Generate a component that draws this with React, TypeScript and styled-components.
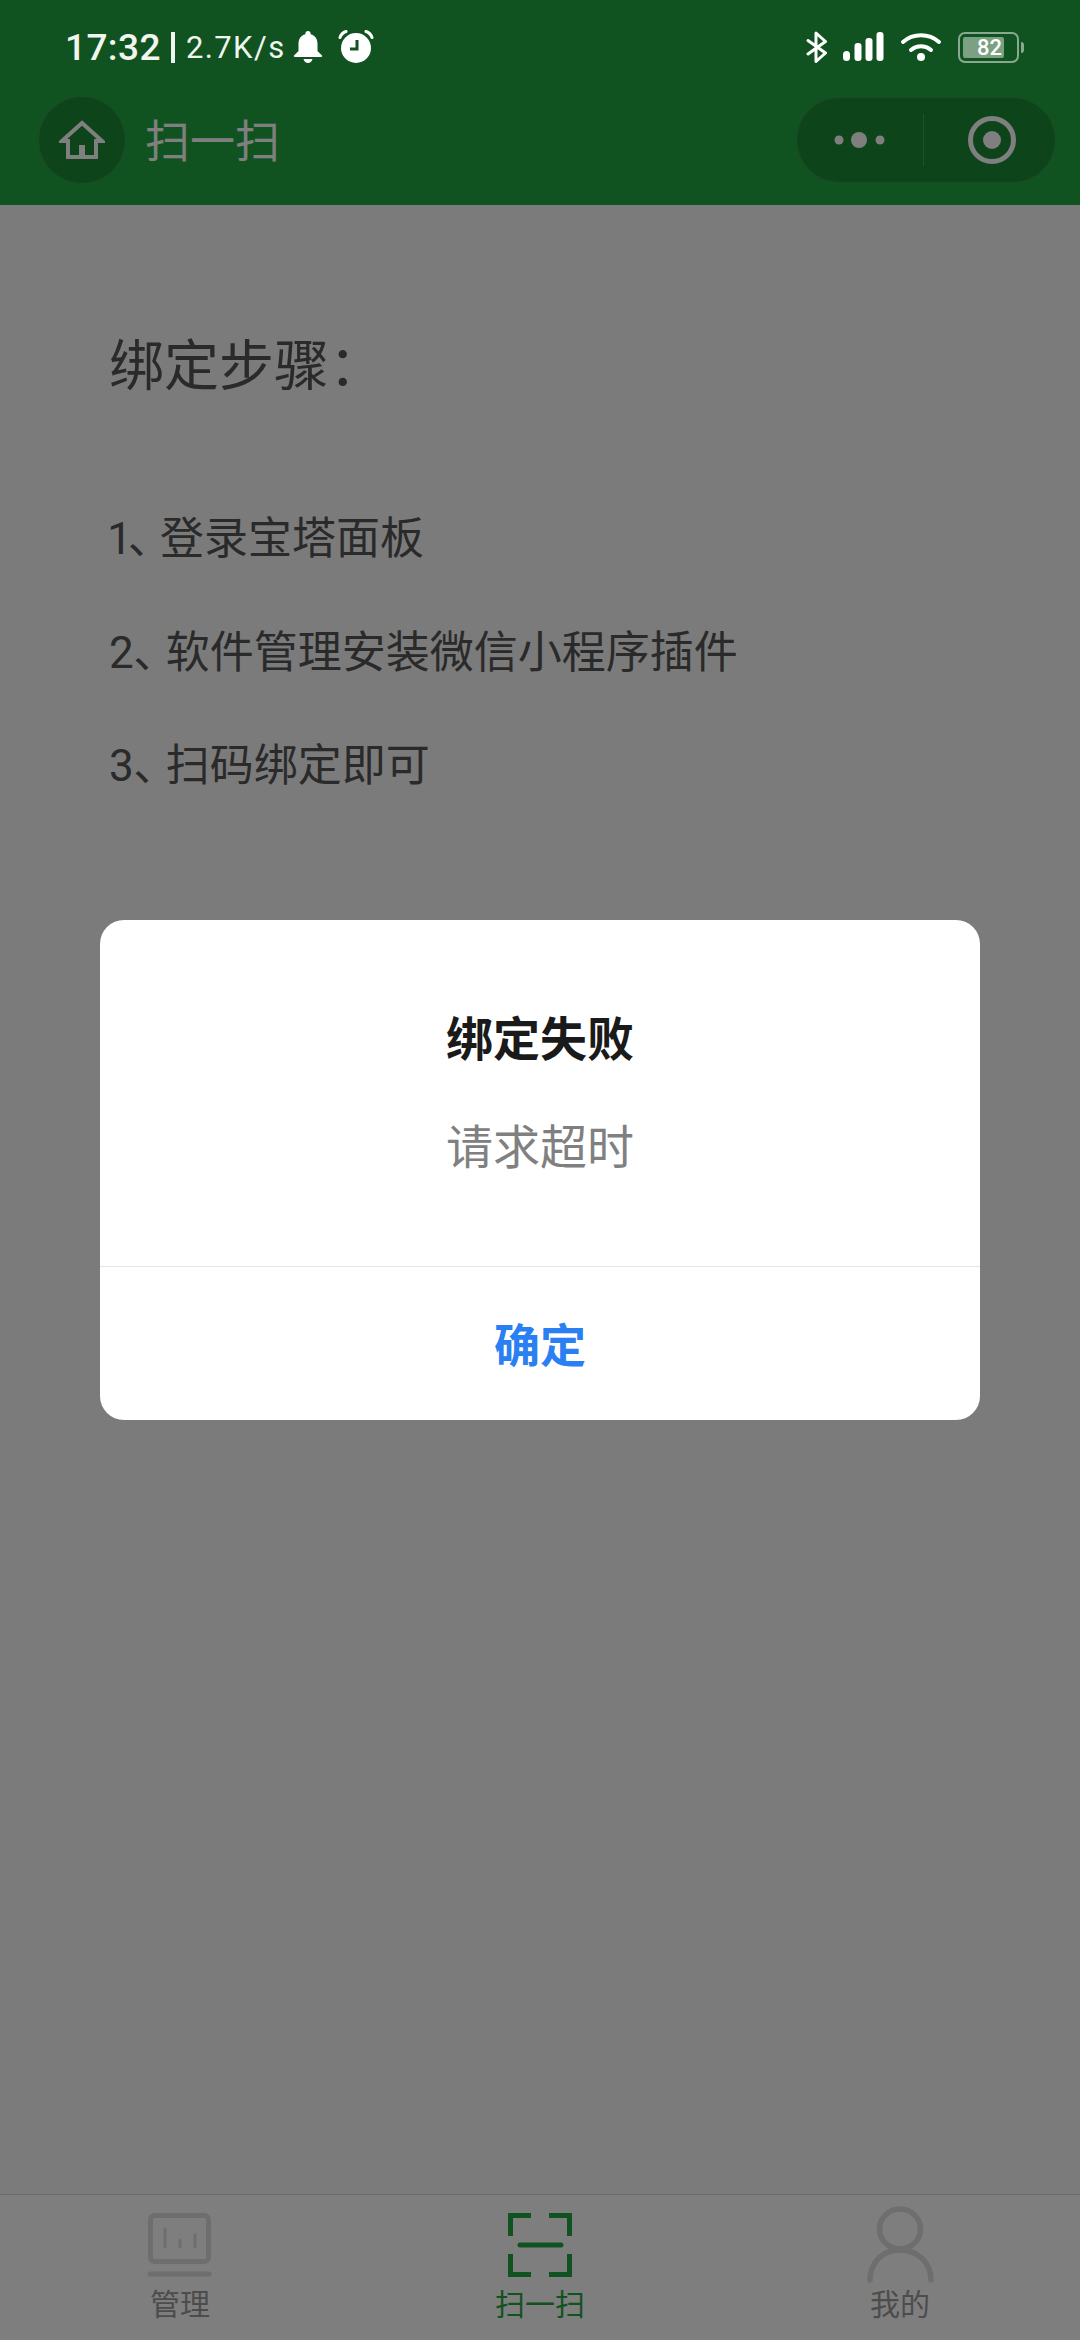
import * as React from "react"
import styled, { createGlobalStyle } from "styled-components"

const GlobalStyle = createGlobalStyle`
  html, body {
    margin: 0;
    padding: 0;
    background: #f6f6f6;
    font-family: Roboto, "Noto Sans CJK SC", sans-serif;
  }
`

const Screen = styled.div`
  position: relative;
  width: 1080px;
  height: 2340px;
  overflow: hidden;
  display: flex;
  flex-direction: column;
  background: #f6f6f6;
`

const StatusBar = styled.div`
  position: absolute;
  top: 0;
  left: 0;
  right: 0;
  z-index: 3;
  height: 94px;
  padding: 0 61px 0 65px;
  display: flex;
  align-items: center;
  justify-content: space-between;
  color: #f0f5f0;
`

const StatusGroup = styled.div`
  display: flex;
  align-items: center;
`

const Clock = styled.span`
  font-size: 37px;
  font-weight: 500;
  letter-spacing: 0.4px;
`

const Pipe = styled.span`
  width: 4px;
  height: 31px;
  margin: 0 11px 0 10px;
  background: #f0f5f0;
`

const Speed = styled.span`
  font-size: 31px;
  font-weight: 400;
  letter-spacing: 1.4px;
  margin-right: 7px;
`

const StatusIcon = styled.svg<{ $gap?: number }>`
  display: block;
  margin-right: ${props => props.$gap ?? 0}px;
`

const Battery = styled.div`
  position: relative;
  box-sizing: border-box;
  width: 61px;
  height: 31px;
  padding: 3px;
  border: 2px solid rgba(255, 255, 255, 0.5);
  border-radius: 7px;

  &::after {
    content: "";
    position: absolute;
    right: -7px;
    top: 8px;
    width: 3px;
    height: 11px;
    border-radius: 0 3px 3px 0;
    background: rgba(255, 255, 255, 0.5);
  }
`

const BatteryFill = styled.div`
  width: 41px;
  height: 21px;
  padding-right: 2px;
  box-sizing: border-box;
  border-radius: 2px;
  background: rgba(255, 255, 255, 0.45);
  color: #ffffff;
  font-size: 22px;
  font-weight: 500;
  line-height: 21px;
  text-align: right;
`

const Header = styled.header`
  flex: none;
  height: 87px;
  padding: 96px 24px 22px 38px;
  display: flex;
  align-items: center;
  background: #22a640;
`

const HomeButton = styled.div`
  box-sizing: border-box;
  width: 88px;
  height: 88px;
  border-radius: 50%;
  border: 1px solid rgba(255, 255, 255, 0.12);
  background: rgba(0, 0, 0, 0.18);
  display: flex;
  align-items: center;
  justify-content: center;
`

const PageTitle = styled.div`
  margin: 6px 0 0 19px;
  flex: 1;
  color: #ffffff;
  font-size: 45px;
  line-height: 88px;
`

const Capsule = styled.div`
  box-sizing: border-box;
  width: 260px;
  height: 86px;
  border-radius: 43px;
  border: 1px solid rgba(255, 255, 255, 0.12);
  background: rgba(0, 0, 0, 0.18);
  display: flex;
  align-items: center;
`

const CapsuleCell = styled.div<{ $inset?: number }>`
  flex: 1;
  box-sizing: border-box;
  padding-left: ${props => props.$inset ?? 0}px;
  display: flex;
  align-items: center;
  justify-content: center;
`

const CapsuleDivider = styled.div`
  width: 1px;
  height: 52px;
  background: rgba(255, 255, 255, 0.2);
`

const Content = styled.main`
  flex: 1;
  padding: 121px 0 0 109px;
  color: #555555;
`

const Heading = styled.div`
  font-size: 55px;
  line-height: 80px;
  margin-bottom: 77px;
`

const Step = styled.div`
  font-size: 44px;
  line-height: 113.5px;
  font-variant-numeric: proportional-nums;
`

const Punct = styled.span`
  font-feature-settings: "palt";
  margin-right: 10px;
`

const TabBar = styled.nav`
  flex: none;
  height: 145px;
  border-top: 1px solid #d6d6d6;
  background: #fdfdff;
  display: grid;
  grid-template-columns: repeat(3, 1fr);
`

const TabItem = styled.div<{ $active?: boolean }>`
  display: flex;
  flex-direction: column;
  align-items: center;
  padding-top: 10px;
  color: ${props => (props.$active ? "#22a640" : "#999999")};
  font-size: 30px;
  line-height: 40px;
`

const TabIcon = styled.svg`
  display: block;
  width: 80px;
  height: 80px;
`

const Mask = styled.div`
  position: absolute;
  inset: 0;
  z-index: 2;
  background: rgba(0, 0, 0, 0.5);
  display: flex;
  align-items: center;
  justify-content: center;
`

const Dialog = styled.div`
  width: 880px;
  height: 500px;
  border-radius: 24px;
  background: #ffffff;
  display: flex;
  flex-direction: column;
  text-align: center;
`

const DialogBody = styled.div`
  padding: 88px 0 86px;
  border-bottom: 1px solid #e5e5e5;
`

const DialogTitle = styled.div`
  font-size: 47px;
  font-weight: 700;
  line-height: 64px;
  color: #1a1a1a;
`

const DialogMessage = styled.div`
  margin-top: 44px;
  font-size: 47px;
  line-height: 64px;
  color: #808080;
`

const DialogButton = styled.div`
  flex: 1;
  padding-bottom: 4px;
  display: flex;
  align-items: center;
  justify-content: center;
  font-size: 46px;
  font-weight: 700;
  color: #2a7ff2;
`

const steps = [
    { num: "1", text: "登录宝塔面板" },
    { num: "2", text: "软件管理安装微信小程序插件" },
    { num: "3", text: "扫码绑定即可" },
]

const TAB_MUTED = "#dcdcdc"
const TAB_GREEN = "#22a640"

export default function App() {
    return (
        <Screen>
            <GlobalStyle />
            <StatusBar>
                <StatusGroup>
                    <Clock>17:32</Clock>
                    <Pipe />
                    <Speed>2.7K/s</Speed>
                    <StatusIcon $gap={15} width="30" height="34" viewBox="0 0 30 34">
                        <path fill="#fff" d="M15 1a2.6 2.6 0 0 1 2.6 2.6v.7C22.6 5.500 24.500 9.500 24.500 14v7l4.500 4.500c.4.6.1 1.500-.9 1.500H1.900c-1 0-1.300-.9-.9-1.500L5.500 21v-7c0-4.500 1.900-8.500 6.900-9.700v-.7A2.600 2.600 0 0 1 15 1Z" />
                        <path fill="#fff" d="M10.500 29h9c-.6 2.500-2.400 4-4.500 4s-3.900-1.500-4.500-4Z" />
                    </StatusIcon>
                    <StatusIcon width="36" height="34" viewBox="0 0 36 34">
                        <circle cx="18" cy="18" r="15" fill="#fff" />
                        <path fill="none" stroke="#115320" strokeWidth="3" d="M19 10v9h-7" />
                        <path fill="none" stroke="#fff" strokeWidth="3" strokeLinecap="round" d="M2 7.500C3 4.500 5 2.500 8 1.500M34 7.500c-1-3-3-5-6-6" />
                    </StatusIcon>
                </StatusGroup>
                <StatusGroup>
                    <StatusIcon $gap={15} width="22" height="32" viewBox="0 0 22 32">
                        <path fill="none" stroke="#fff" strokeWidth="3" strokeLinecap="round" strokeLinejoin="round" d="M2 9.500 19.500 22 10 30.500V2l9.500 8.500L2 23" />
                    </StatusIcon>
                    <StatusIcon $gap={16} width="41" height="30" viewBox="0 0 41 30">
                        <rect x="0" y="19" width="7" height="10" rx="3.500" fill="#fff" />
                        <rect x="11.500" y="11" width="7" height="18" rx="3" fill="#fff" />
                        <rect x="22.500" y="6" width="7" height="23" rx="3" fill="#fff" />
                        <rect x="33.500" y="0" width="7" height="29" rx="3" fill="#fff" />
                    </StatusIcon>
                    <StatusIcon $gap={16} width="42" height="30" viewBox="0 0 42 30">
                        <path fill="none" stroke="#fff" strokeWidth="4" strokeLinecap="round" d="M3 10C13 1 29 1 39 10M11 18c6-5 14-5 20 0" />
                        <circle cx="21" cy="25" r="4" fill="#fff" />
                    </StatusIcon>
                    <Battery>
                        <BatteryFill>82</BatteryFill>
                    </Battery>
                </StatusGroup>
            </StatusBar>

            <Header>
                <HomeButton>
                    <svg width="46" height="40" viewBox="0 0 46 40">
                        <path fill="none" stroke="#fff" strokeWidth="4" strokeLinejoin="miter" d="M3 21 23 3l20 18h-6v16H9V21Z" />
                        <rect x="20" y="25" width="6" height="12" fill="#fff" />
                    </svg>
                </HomeButton>
                <PageTitle>扫一扫</PageTitle>
                <Capsule>
                    <CapsuleCell>
                        <svg width="52" height="20" viewBox="0 0 52 20">
                            <circle cx="5" cy="10" r="4.500" fill="#fff" />
                            <circle cx="25" cy="10" r="8" fill="#fff" />
                            <circle cx="46" cy="10" r="4.500" fill="#fff" />
                        </svg>
                    </CapsuleCell>
                    <CapsuleDivider />
                    <CapsuleCell $inset={6}>
                        <svg width="50" height="50" viewBox="0 0 50 50">
                            <circle cx="25" cy="25" r="21.500" fill="none" stroke="#fff" strokeWidth="5" />
                            <circle cx="25" cy="25" r="9" fill="#fff" />
                        </svg>
                    </CapsuleCell>
                </Capsule>
            </Header>

            <Content>
                <Heading>绑定步骤：</Heading>
                {steps.map(step => (
                    <Step key={step.num}>
                        {step.num}
                        <Punct>、</Punct>
                        {step.text}
                    </Step>
                ))}
            </Content>

            <TabBar>
                <TabItem>
                    <TabIcon viewBox="0 0 80 80">
                        <rect x="10.500" y="10.500" width="58" height="46" rx="4" fill="none" stroke={TAB_MUTED} strokeWidth="5" />
                        <path fill="none" stroke={TAB_MUTED} strokeWidth="3" strokeLinecap="round" d="M25 24v18M40 35v7M55 30v12" />
                        <path fill="none" stroke={TAB_MUTED} strokeWidth="5" strokeLinecap="round" d="M10 69h59" />
                    </TabIcon>
                    管理
                </TabItem>
                <TabItem $active>
                    <TabIcon viewBox="0 0 80 80">
                        <path fill="none" stroke={TAB_GREEN} strokeWidth="5" d="M31 10.500H10.500V31M49 10.500h20.500V31M10.500 49v20.500H31M69.500 49v20.500H49" />
                        <path fill="none" stroke={TAB_GREEN} strokeWidth="5" strokeLinecap="round" d="M20 40h41" />
                    </TabIcon>
                    扫一扫
                </TabItem>
                <TabItem>
                    <TabIcon viewBox="0 0 80 80">
                        <ellipse cx="40" cy="24" rx="20.500" ry="20" fill="none" stroke={TAB_MUTED} strokeWidth="5.500" />
                        <path fill="none" stroke={TAB_MUTED} strokeWidth="5.500" strokeLinecap="round" d="M10 75c0-18 13-30 30-30s31 12 31 30" />
                    </TabIcon>
                    我的
                </TabItem>
            </TabBar>

            <Mask>
                <Dialog>
                    <DialogBody>
                        <DialogTitle>绑定失败</DialogTitle>
                        <DialogMessage>请求超时</DialogMessage>
                    </DialogBody>
                    <DialogButton>确定</DialogButton>
                </Dialog>
            </Mask>
        </Screen>
    )
}
